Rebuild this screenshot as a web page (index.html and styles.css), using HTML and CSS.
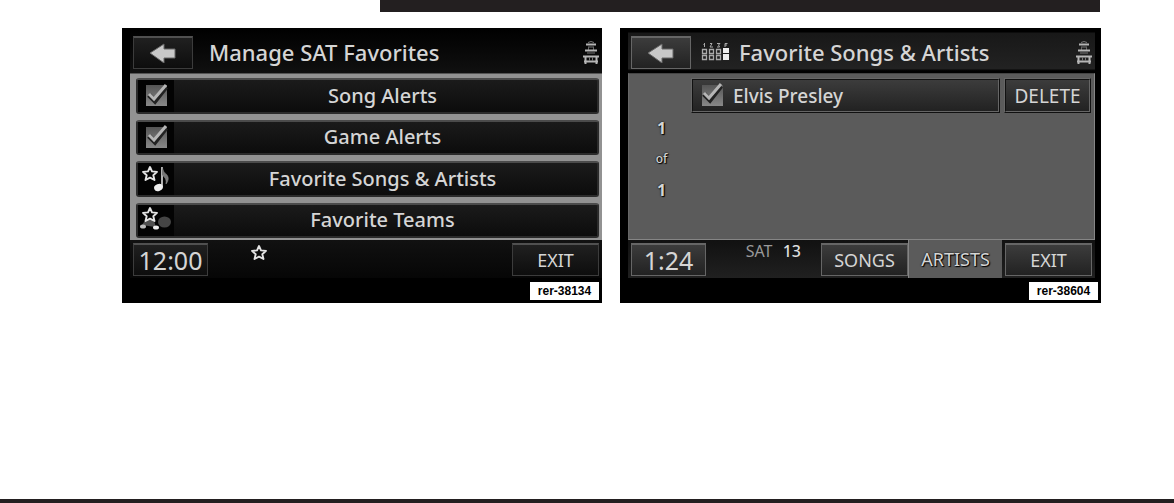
FILE: index.html
```html
<!DOCTYPE html>
<html lang="en">
<head>
<meta charset="utf-8">
<title>SAT Favorites</title>
<link rel="stylesheet" href="styles.css">
</head>
<body>
<svg class="defs" aria-hidden="true">
  <symbol id="arrow" viewBox="0 0 28 20"><path d="M1 10 15 1v5h11v9H15v5z" fill="#c8c8c8" stroke="#666"/></symbol>
  <symbol id="star" viewBox="0 0 18 17"><path d="M9 2l2 4.400 5 .5-3.700 3.400 1.200 4.700L9 12.600 4.500 15l1.200-4.700L2 6.900l5-.5z" fill="none" stroke="#e4e4e4" stroke-width="1.900" stroke-linejoin="round"/></symbol>
  <symbol id="tick" viewBox="0 0 22 24"><path d="M3 12l6 6L20 4" fill="none" stroke="#222" stroke-width="5"/><path d="M3 11l5 5L20 2" fill="none" stroke="#b5b5b5" stroke-width="3"/></symbol>
  <symbol id="seat" viewBox="0 0 16 24"><g fill="none" stroke="#b5b5b5"><path d="M5 2.500q3-2 6 0" stroke="#777"/><path d="M3 4.500h10" stroke-width="2"/><path d="M5 7h6" stroke="#777"/><path d="M5.500 7v3M10.500 7v3" stroke="#666"/><path d="M2 10.500h12" stroke-width="2"/><path d="M4 13h8" stroke="#777"/><path d="M0 16.500h16M1 21.500h14" stroke-width="2"/><path d="M2.500 17v7M13.500 17v7" stroke-width="2"/><path d="M6.500 17v4M9.500 17v4" stroke="#777"/></g></symbol>
</svg>
<div class="top-rule"></div>
<main class="screens">
  <section class="screen">
    <header class="head">
      <button class="btn back" aria-label="Back"><svg width="28" height="20"><use href="#arrow"/></svg></button>
      <h1 class="title">Manage SAT Favorites</h1>
      <svg class="seat" width="16" height="24"><use href="#seat"/></svg>
    </header>
    <div class="list">
      <label class="row"><span class="icon"><input class="box" type="checkbox" checked><svg class="tick" width="22" height="24"><use href="#tick"/></svg></span><span class="name">Song Alerts</span></label>
      <label class="row"><span class="icon"><input class="box" type="checkbox" checked><svg class="tick" width="22" height="24"><use href="#tick"/></svg></span><span class="name">Game Alerts</span></label>
      <button class="row"><span class="icon"><svg width="36" height="30" viewBox="0 0 36 30"><use href="#star" x="3" y="1" width="18" height="17"/><path d="M24 3v20" stroke="#eee" stroke-width="1.500"/><path d="M24 3q1 5 5 8 3 4-1 9 1-6-4-9" fill="#777" stroke="#999" stroke-width=".5"/><ellipse cx="20.500" cy="23.500" rx="4.500" ry="3.500" transform="rotate(-22 20.500 23.500)" fill="#eee"/></svg></span><span class="name">Favorite Songs &amp; Artists</span></button>
      <button class="row"><span class="icon"><svg width="36" height="30" viewBox="0 0 36 30"><path d="M4 20q4-7 10-5 4 2 3 7z" fill="#505050"/><ellipse cx="26.500" cy="17" rx="6.500" ry="5.500" fill="#454545"/><ellipse cx="5" cy="21.500" rx="3" ry="2" fill="#bbb"/><ellipse cx="18" cy="22.500" rx="3" ry="2" fill="#eee"/><use href="#star" x="3" y="1" width="18" height="17"/></svg></span><span class="name">Favorite Teams</span></button>
    </div>
    <footer class="foot">
      <button class="btn time">12:00</button>
      <svg class="foot-star" width="18" height="17"><use href="#star"/></svg>
      <button class="btn key push">EXIT</button>
    </footer>
    <span class="ref">rer-38134</span>
  </section>

  <section class="screen inset">
    <header class="head">
      <button class="btn back" aria-label="Back"><svg width="28" height="20"><use href="#arrow"/></svg></button>
      <svg class="presets" width="28" height="20" viewBox="0 0 28 20"><g fill="none" stroke="#aaa"><path d="M1.500 7.500h4v4h-4zM8.500 7.500h4v4h-4zM15.500 7.500h4v4h-4zM1.500 13.500h4v4h-4zM8.500 13.500h4v4h-4zM15.500 13.500h4v4h-4z" stroke-width="1.300"/><path d="M3.500 1v4M2.500 2.500h1M9 1.500h2L9 5h3M16 1.500h3L17.500 3l1 2H16M26.500 1.500H24V5M24 3h2"/></g><path d="M22 6h6v5h-6zM22 12h6v6h-6z" fill="#eee"/></svg>
      <h2 class="title">Favorite Songs &amp; Artists</h2>
      <svg class="seat" width="16" height="24"><use href="#seat"/></svg>
    </header>
    <div class="panel">
      <div class="count"><b>1</b><span class="of">of</span><b>1</b></div>
      <div class="entry">
        <label class="btn artist"><span class="icon"><input class="box" type="checkbox" checked><svg class="tick" width="22" height="24"><use href="#tick"/></svg></span>Elvis Presley</label>
        <button class="btn key">DELETE</button>
      </div>
    </div>
    <footer class="foot">
      <button class="btn time">1:24</button>
      <p class="station">SAT <span class="channel">13</span></p>
      <button class="btn key songs">SONGS</button>
      <button class="tab">ARTISTS</button>
      <button class="btn key">EXIT</button>
    </footer>
    <span class="ref">rer-38604</span>
  </section>
</main>
<div class="bottom-rule"></div>
</body>
</html>
```
FILE: styles.css
```css
* { box-sizing: border-box; }
body {
  margin: 0;
  min-height: 100vh;
  display: flex;
  flex-direction: column;
  background: #fff;
  font-family: "Noto Sans", sans-serif;
  color: #d5d5d5;
}
button { font: inherit; color: inherit; padding: 0; border: 0; cursor: pointer; }
svg { display: block; flex: none; }
.defs { width: 0; height: 0; position: absolute; }
.top-rule { height: 12px; margin: 0 74px 0 380px; background: #231f20; }
.bottom-rule { height: 4px; margin-top: auto; background: #231f20; }
.screens {
  display: grid;
  grid-template-columns: 480fr 481fr;
  gap: 18px;
  padding: 16px 73px 0 122px;
}
.screen {
  position: relative;
  display: flex;
  flex-direction: column;
  min-height: 275px;
  padding-left: 8px;
  background: #000;
}
.inset { padding-right: 6px; }
.head {
  display: flex;
  align-items: center;
  height: 45px;
  padding: 3px 3px 0;
  background: linear-gradient(#000, #101010);
}
.inset .head { background: linear-gradient(#000 8%, #181818 12%, #222 90%, #000 95%); }
.btn {
  height: 33px;
  background: linear-gradient(#202020, #0d0d0d);
  border: 1px solid #3c3c3c;
  border-top: 2px solid #505050;
}
.inset .btn { background: linear-gradient(#3c3c3c, #222); border-color: #666; }
.back { width: 60px; display: flex; align-items: center; justify-content: center; }
.title { margin: 0 0 0 16px; font-size: 22px; font-weight: 500; line-height: 28px; white-space: nowrap; }
.seat { margin-left: auto; }
.presets { margin: 0 10px; }
.presets + .title { margin-left: 0; }
.list {
  display: grid;
  grid-auto-rows: 1fr;
  gap: 6px;
  height: 167px;
  padding: 4px 3px 2px 6px;
  background: #929292;
  border-top: 1px solid #555;
}
.row {
  display: flex;
  align-items: center;
  min-height: 0;
  background: linear-gradient(#1b1b1b, #0c0c0c);
  border: 2px solid #2b2b2b;
  border-top-color: #4b4b4b;
  border-radius: 3px;
  font-size: 20px;
  font-weight: 500;
  line-height: 24px;
}
.list .icon { align-self: stretch; background: #030303; }
.icon { position: relative; width: 36px; display: flex; align-items: center; justify-content: center; }
.box {
  appearance: none;
  width: 21px;
  height: 21px;
  margin: 0;
  background: linear-gradient(#555, #888);
}
.tick { position: absolute; left: 8px; bottom: 5px; pointer-events: none; }
.name { flex: 1; text-align: center; padding-right: 6px; }
.foot {
  display: flex;
  align-items: center;
  height: 38px;
  padding: 0 3px;
  background: linear-gradient(#111, #060606);
}
.inset .foot { background: linear-gradient(#111, #202020); }
.time { width: 75px; font-size: 25px; line-height: 28px; }
.foot-star { margin: 0 0 14px 42px; }
.key { width: 87px; font-size: 18px; line-height: 24px; }
.push { margin-left: auto; }
.ref {
  position: absolute;
  right: 3px;
  bottom: 3px;
  width: 69px;
  height: 18px;
  background: #fff;
  color: #000;
  font: bold 12px/18px "Liberation Sans", sans-serif;
  text-align: center;
}
.panel {
  display: flex;
  height: 167px;
  padding: 4px 3px 0;
  background: #5b5b5b;
  border: 1px solid #858585;
  border-top-color: #444;
  border-left-color: #666;
}
.count {
  width: 59px;
  display: flex;
  flex-direction: column;
  align-items: center;
  gap: 7px;
  padding-top: 38px;
  font-size: 16px;
  line-height: 24px;
  text-shadow: 0 0 2px #000, 1px 1px 1px #000;
}
.of { font-size: 12px; font-weight: 500; }
.entry { flex: 1; display: flex; gap: 4px; }
.inset .entry .btn { height: 35px; border: 2px ridge #666; }
.inset .entry .key { font-size: 19px; }
.artist { flex: 1; display: flex; align-items: center; gap: 2px; font-size: 19px; font-weight: 500; line-height: 24px; }
.artist .icon { width: 38px; align-self: stretch; }
.station { margin: 0 0 16px auto; font-size: 16px; line-height: 20px; color: #999; }
.channel { margin-left: 6px; color: #ddd; font-weight: 500; }
.songs { margin-left: 20px; }
.tab {
  width: 94px;
  height: 38px;
  margin-right: 3px;
  background: #5b5b5b;
  border-left: 1px solid #858585;
  font-size: 18px;
  text-shadow: 0 0 2px #000, 1px 1px 1px #000;
}
```
